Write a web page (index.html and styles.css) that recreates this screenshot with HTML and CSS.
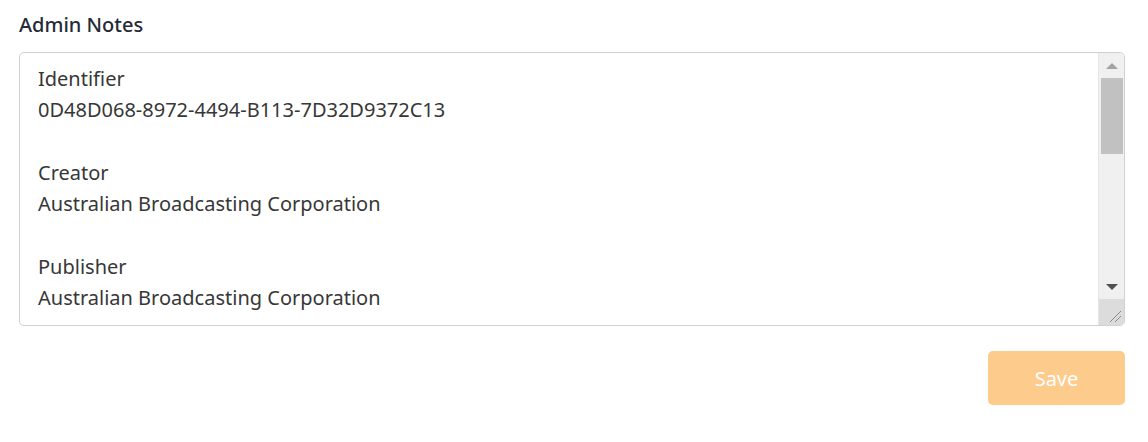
FILE: index.html
```html
<!DOCTYPE html>
<html lang="en">
<head>
<meta charset="utf-8">
<title>Admin Notes</title>
<link rel="stylesheet" href="styles.css">
</head>
<body>
<div class="panel">
  <label class="label">Admin Notes</label>
  <div class="notes">
    <div class="notes-text">
      <div class="line">Identifier</div>
      <div class="line">0D48D068-8972-4494-B113-7D32D9372C13</div>
      <div class="line">&nbsp;</div>
      <div class="line">Creator</div>
      <div class="line">Australian Broadcasting Corporation</div>
      <div class="line">&nbsp;</div>
      <div class="line">Publisher</div>
      <div class="line">Australian Broadcasting Corporation</div>
    </div>
    <div class="scrollbar">
      <div class="sb-btn"><span class="arrow-up"></span></div>
      <div class="sb-track"><div class="sb-thumb"></div></div>
      <div class="sb-btn"><span class="arrow-down"></span></div>
      <div class="resizer">
        <svg width="14" height="14" viewBox="0 0 14 14"><path d="M2 13 L13 2 M7 13 L13 7" stroke="#8a8a8a" stroke-width="1" fill="none"/></svg>
      </div>
    </div>
  </div>
  <div class="actions">
    <button class="save">Save</button>
  </div>
</div>
</body>
</html>
```
FILE: styles.css
```css
html, body {
  margin: 0;
  padding: 0;
  background: #ffffff;
}
body {
  font-family: "Noto Sans", "Open Sans", sans-serif;
}
.panel {
  padding: 12px 23px 0 19px;
  display: flex;
  flex-direction: column;
}
.label {
  display: block;
  font-size: 20px;
  font-weight: 500;
  color: #252a36;
  line-height: 26px;
  margin-bottom: 14px;
}
.notes {
  display: flex;
  height: 274px;
  box-sizing: border-box;
  border: 1px solid #cdd1d6;
  border-radius: 5px;
  overflow: hidden;
}
.notes-text {
  flex: 1;
  overflow: hidden;
  padding: 10px 18px 0 18px;
  font-size: 20px;
  line-height: 31.3px;
  color: #373737;
}
.scrollbar {
  width: 25px;
  background: #f0f0f0;
  display: flex;
  flex-direction: column;
  border-left: 1px solid #e6e6e6;
}
.sb-btn {
  height: 25px;
  display: flex;
  align-items: center;
  justify-content: center;
}
.arrow-up {
  width: 0;
  height: 0;
  border-left: 6px solid transparent;
  border-right: 6px solid transparent;
  border-bottom: 6px solid #a3a3a3;
}
.arrow-down {
  width: 0;
  height: 0;
  border-left: 6px solid transparent;
  border-right: 6px solid transparent;
  border-top: 6px solid #505050;
}
.sb-track {
  flex: 1;
  padding: 0 1px 0 2px;
}
.sb-thumb {
  height: 76px;
  background: #c1c1c1;
}
.resizer {
  height: 26px;
  background: #dcdcdc;
  display: flex;
  align-items: flex-end;
  justify-content: flex-end;
  padding: 0 2px 2px 0;
  box-sizing: border-box;
}
.resizer svg {
  display: block;
}
.actions {
  display: flex;
  justify-content: flex-end;
  margin-top: 25px;
}
.save {
  width: 137px;
  height: 54px;
  border: none;
  border-radius: 5px;
  background: #fdcb8c;
  color: #ffffff;
  font-family: "Noto Sans", "Open Sans", sans-serif;
  font-size: 20px;
  padding: 0;
}
```
